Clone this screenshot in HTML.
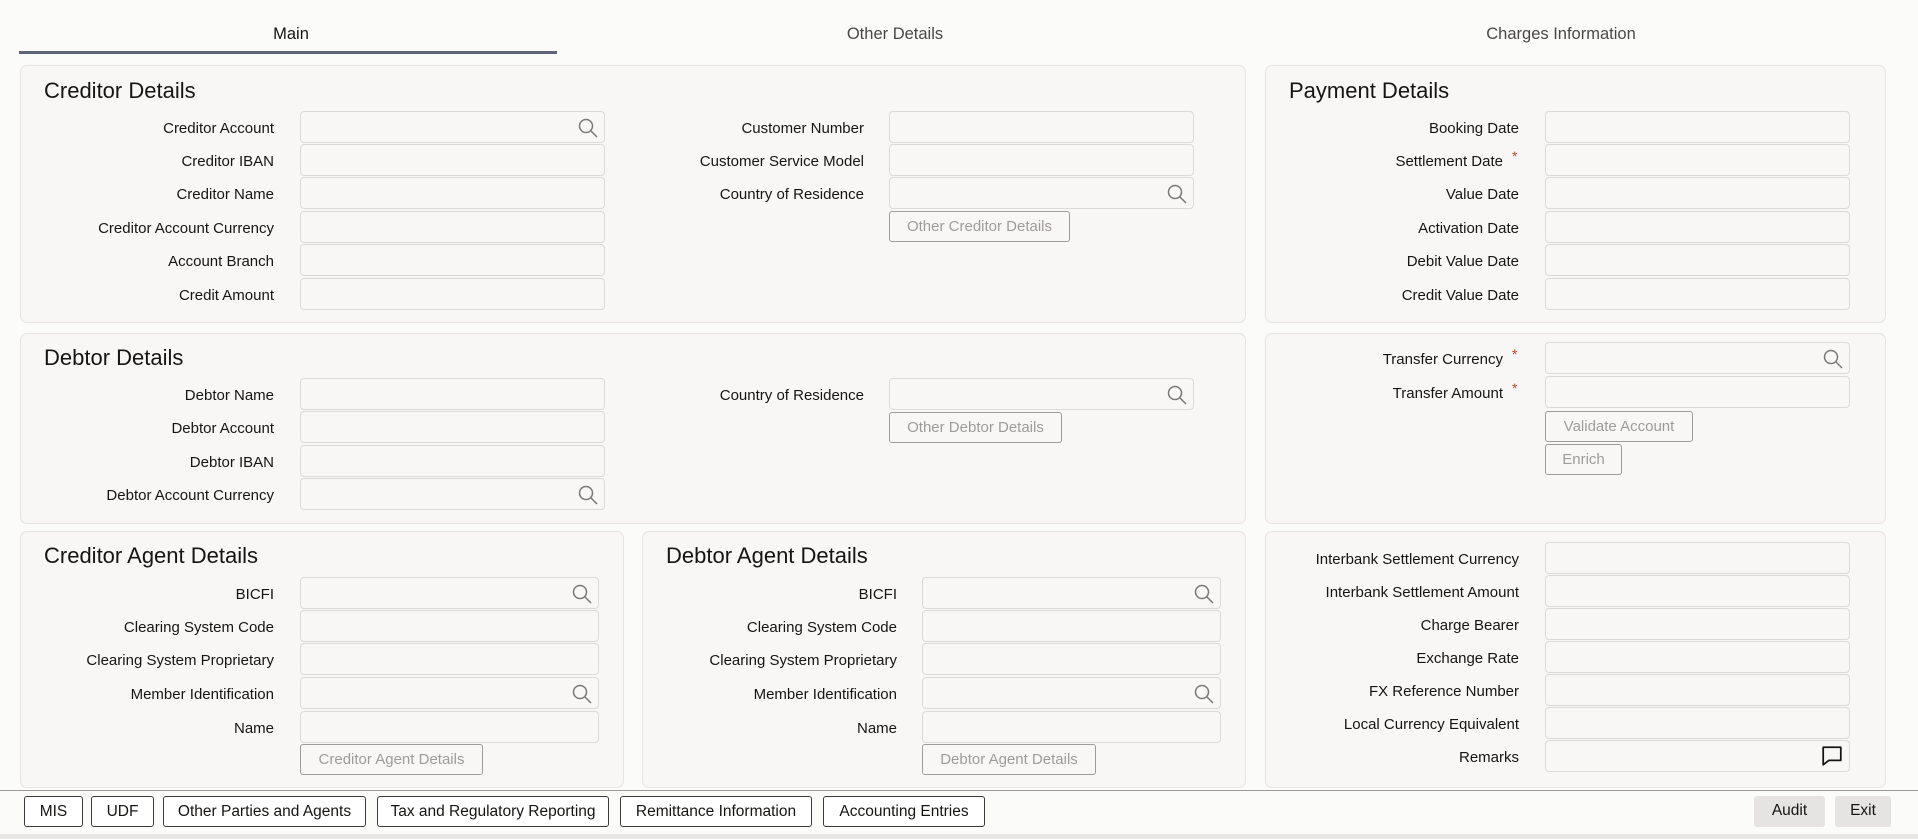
<!DOCTYPE html>
<html><head><meta charset="utf-8"><style>
*{box-sizing:border-box;margin:0;padding:0}
body{width:1918px;height:839px;background:#fbfbfa;font-family:"Liberation Sans",sans-serif;color:#161513;position:relative;overflow:hidden}
.a{position:absolute}
.tab{position:absolute;top:25px;font-size:16.5px;color:#4a4845;transform:translateX(-50%)}
.p{position:absolute;background:#f8f7f5;border:1px solid #e6e4e1;border-radius:7px}
.h{position:absolute;font-size:22px;color:#161513;transform:translateY(2px)}
.l{position:absolute;left:0;text-align:right;font-size:15px;line-height:18px;white-space:nowrap;transform:translateY(2px)}
.i{position:absolute;height:32px;background:#f8f7f5;border:1px solid #dcdad6;border-radius:4px}
.s{position:absolute;right:6px;top:6px;width:20px;height:20px}
.b{position:absolute;height:31px;border:1px solid #9e9c98;border-radius:3px;background:#f8f7f5;color:#9e9c98;font-size:15px;text-align:center;line-height:29px}
.f{position:absolute;top:796px;height:31px;border:1px solid #3b3a38;border-radius:3px;background:#fff;font-size:15.5px;text-align:center;line-height:29px}
.r{color:#c74634;position:absolute;font-size:14px}
</style></head><body>
<div class="tab" style="left:291px;color:#161513">Main</div>
<div class="tab" style="left:895px">Other Details</div>
<div class="tab" style="left:1561px">Charges Information</div>
<div class="a" style="left:19px;top:51px;width:538px;height:3px;background:#5d6478"></div>

<!-- Creditor -->
<div class="p" style="left:20px;top:65px;width:1226px;height:258px"></div>
<div class="h" style="left:44px;top:76px">Creditor Details</div>
<div class="l" style="top:118px;width:274px">Creditor Account</div>
<div class="l" style="top:151px;width:274px">Creditor IBAN</div>
<div class="l" style="top:184px;width:274px">Creditor Name</div>
<div class="l" style="top:218px;width:274px">Creditor Account Currency</div>
<div class="l" style="top:251px;width:274px">Account Branch</div>
<div class="l" style="top:285px;width:274px">Credit Amount</div>
<div class="i" style="left:300px;top:111px;width:305px"><svg class="s" viewBox="0 0 20 20"><circle cx="8" cy="8" r="6.5" fill="none" stroke="#7a7874" stroke-width="1.5"/><path d="M13 13l6 6" stroke="#7a7874" stroke-width="1.5"/></svg></div>
<div class="i" style="left:300px;top:144px;width:305px"></div>
<div class="i" style="left:300px;top:177px;width:305px"></div>
<div class="i" style="left:300px;top:211px;width:305px"></div>
<div class="i" style="left:300px;top:244px;width:305px"></div>
<div class="i" style="left:300px;top:278px;width:305px"></div>
<div class="l" style="top:118px;width:864px">Customer Number</div>
<div class="l" style="top:151px;width:864px">Customer Service Model</div>
<div class="l" style="top:184px;width:864px">Country of Residence</div>
<div class="i" style="left:889px;top:111px;width:305px"></div>
<div class="i" style="left:889px;top:144px;width:305px"></div>
<div class="i" style="left:889px;top:177px;width:305px"><svg class="s" viewBox="0 0 20 20"><circle cx="8" cy="8" r="6.5" fill="none" stroke="#7a7874" stroke-width="1.5"/><path d="M13 13l6 6" stroke="#7a7874" stroke-width="1.5"/></svg></div>
<div class="b" style="left:889px;top:211px;width:181px">Other Creditor Details</div>

<!-- Payment -->
<div class="p" style="left:1265px;top:65px;width:621px;height:258px"></div>
<div class="h" style="left:1289px;top:76px">Payment Details</div>
<div class="l" style="top:118px;width:1519px">Booking Date</div>
<div class="l" style="top:151px;width:1503px">Settlement Date</div><div class="r" style="left:1512px;top:148px">*</div>
<div class="l" style="top:184px;width:1519px">Value Date</div>
<div class="l" style="top:218px;width:1519px">Activation Date</div>
<div class="l" style="top:251px;width:1519px">Debit Value Date</div>
<div class="l" style="top:285px;width:1519px">Credit Value Date</div>
<div class="i" style="left:1545px;top:111px;width:305px"></div>
<div class="i" style="left:1545px;top:144px;width:305px"></div>
<div class="i" style="left:1545px;top:177px;width:305px"></div>
<div class="i" style="left:1545px;top:211px;width:305px"></div>
<div class="i" style="left:1545px;top:244px;width:305px"></div>
<div class="i" style="left:1545px;top:278px;width:305px"></div>

<!-- Debtor -->
<div class="p" style="left:20px;top:333px;width:1226px;height:191px"></div>
<div class="h" style="left:44px;top:343px">Debtor Details</div>
<div class="l" style="top:385px;width:274px">Debtor Name</div>
<div class="l" style="top:418px;width:274px">Debtor Account</div>
<div class="l" style="top:452px;width:274px">Debtor IBAN</div>
<div class="l" style="top:485px;width:274px">Debtor Account Currency</div>
<div class="i" style="left:300px;top:378px;width:305px"></div>
<div class="i" style="left:300px;top:411px;width:305px"></div>
<div class="i" style="left:300px;top:445px;width:305px"></div>
<div class="i" style="left:300px;top:478px;width:305px"><svg class="s" viewBox="0 0 20 20"><circle cx="8" cy="8" r="6.5" fill="none" stroke="#7a7874" stroke-width="1.5"/><path d="M13 13l6 6" stroke="#7a7874" stroke-width="1.5"/></svg></div>
<div class="l" style="top:385px;width:864px">Country of Residence</div>
<div class="i" style="left:889px;top:378px;width:305px"><svg class="s" viewBox="0 0 20 20"><circle cx="8" cy="8" r="6.5" fill="none" stroke="#7a7874" stroke-width="1.5"/><path d="M13 13l6 6" stroke="#7a7874" stroke-width="1.5"/></svg></div>
<div class="b" style="left:889px;top:412px;width:173px">Other Debtor Details</div>

<!-- Transfer -->
<div class="p" style="left:1265px;top:333px;width:621px;height:191px"></div>
<div class="l" style="top:349px;width:1503px">Transfer Currency</div><div class="r" style="left:1512px;top:346px">*</div>
<div class="l" style="top:383px;width:1503px">Transfer Amount</div><div class="r" style="left:1512px;top:380px">*</div>
<div class="i" style="left:1545px;top:342px;width:305px"><svg class="s" viewBox="0 0 20 20"><circle cx="8" cy="8" r="6.5" fill="none" stroke="#7a7874" stroke-width="1.5"/><path d="M13 13l6 6" stroke="#7a7874" stroke-width="1.5"/></svg></div>
<div class="i" style="left:1545px;top:376px;width:305px"></div>
<div class="b" style="left:1545px;top:411px;width:148px">Validate Account</div>
<div class="b" style="left:1545px;top:444px;width:77px">Enrich</div>

<!-- Creditor Agent -->
<div class="p" style="left:20px;top:531px;width:604px;height:257px"></div>
<div class="h" style="left:44px;top:541px">Creditor Agent Details</div>
<div class="l" style="top:584px;width:274px">BICFI</div>
<div class="l" style="top:617px;width:274px">Clearing System Code</div>
<div class="l" style="top:650px;width:274px">Clearing System Proprietary</div>
<div class="l" style="top:684px;width:274px">Member Identification</div>
<div class="l" style="top:718px;width:274px">Name</div>
<div class="i" style="left:300px;top:577px;width:299px"><svg class="s" viewBox="0 0 20 20"><circle cx="8" cy="8" r="6.5" fill="none" stroke="#7a7874" stroke-width="1.5"/><path d="M13 13l6 6" stroke="#7a7874" stroke-width="1.5"/></svg></div>
<div class="i" style="left:300px;top:610px;width:299px"></div>
<div class="i" style="left:300px;top:643px;width:299px"></div>
<div class="i" style="left:300px;top:677px;width:299px"><svg class="s" viewBox="0 0 20 20"><circle cx="8" cy="8" r="6.5" fill="none" stroke="#7a7874" stroke-width="1.5"/><path d="M13 13l6 6" stroke="#7a7874" stroke-width="1.5"/></svg></div>
<div class="i" style="left:300px;top:711px;width:299px"></div>
<div class="b" style="left:300px;top:744px;width:183px">Creditor Agent Details</div>

<!-- Debtor Agent -->
<div class="p" style="left:642px;top:531px;width:604px;height:257px"></div>
<div class="h" style="left:666px;top:541px">Debtor Agent Details</div>
<div class="l" style="top:584px;width:897px">BICFI</div>
<div class="l" style="top:617px;width:897px">Clearing System Code</div>
<div class="l" style="top:650px;width:897px">Clearing System Proprietary</div>
<div class="l" style="top:684px;width:897px">Member Identification</div>
<div class="l" style="top:718px;width:897px">Name</div>
<div class="i" style="left:922px;top:577px;width:299px"><svg class="s" viewBox="0 0 20 20"><circle cx="8" cy="8" r="6.5" fill="none" stroke="#7a7874" stroke-width="1.5"/><path d="M13 13l6 6" stroke="#7a7874" stroke-width="1.5"/></svg></div>
<div class="i" style="left:922px;top:610px;width:299px"></div>
<div class="i" style="left:922px;top:643px;width:299px"></div>
<div class="i" style="left:922px;top:677px;width:299px"><svg class="s" viewBox="0 0 20 20"><circle cx="8" cy="8" r="6.5" fill="none" stroke="#7a7874" stroke-width="1.5"/><path d="M13 13l6 6" stroke="#7a7874" stroke-width="1.5"/></svg></div>
<div class="i" style="left:922px;top:711px;width:299px"></div>
<div class="b" style="left:922px;top:744px;width:174px">Debtor Agent Details</div>

<!-- Interbank -->
<div class="p" style="left:1265px;top:531px;width:621px;height:257px"></div>
<div class="l" style="top:549px;width:1519px">Interbank Settlement Currency</div>
<div class="l" style="top:582px;width:1519px">Interbank Settlement Amount</div>
<div class="l" style="top:615px;width:1519px">Charge Bearer</div>
<div class="l" style="top:648px;width:1519px">Exchange Rate</div>
<div class="l" style="top:681px;width:1519px">FX Reference Number</div>
<div class="l" style="top:714px;width:1519px">Local Currency Equivalent</div>
<div class="l" style="top:747px;width:1519px">Remarks</div>
<div class="i" style="left:1545px;top:542px;width:305px"></div>
<div class="i" style="left:1545px;top:575px;width:305px"></div>
<div class="i" style="left:1545px;top:608px;width:305px"></div>
<div class="i" style="left:1545px;top:641px;width:305px"></div>
<div class="i" style="left:1545px;top:674px;width:305px"></div>
<div class="i" style="left:1545px;top:707px;width:305px"></div>
<div class="i" style="left:1545px;top:740px;width:305px"><svg class="s" viewBox="0 0 20 20" style="width:22px;height:22px;top:4px"><path d="M2 2h16v12H7l-5 4z" fill="none" stroke="#161513" stroke-width="1.6" stroke-linejoin="round"/></svg></div>

<!-- Footer -->
<div class="a" style="left:0;top:790px;width:1918px;height:1px;background:#9a9894"></div>
<div class="f" style="left:24px;width:59px">MIS</div>
<div class="f" style="left:91px;width:63px">UDF</div>
<div class="f" style="left:163px;width:203px">Other Parties and Agents</div>
<div class="f" style="left:377px;width:232px">Tax and Regulatory Reporting</div>
<div class="f" style="left:620px;width:192px">Remittance Information</div>
<div class="f" style="left:823px;width:162px">Accounting Entries</div>
<div class="f" style="left:1754px;width:71px;border:none;background:#e5e4e2">Audit</div>
<div class="f" style="left:1835px;width:56px;border:none;background:#e5e4e2">Exit</div>
<div class="a" style="left:0;top:834px;width:1918px;height:5px;background:#e8e7e5"></div>
</body></html>
